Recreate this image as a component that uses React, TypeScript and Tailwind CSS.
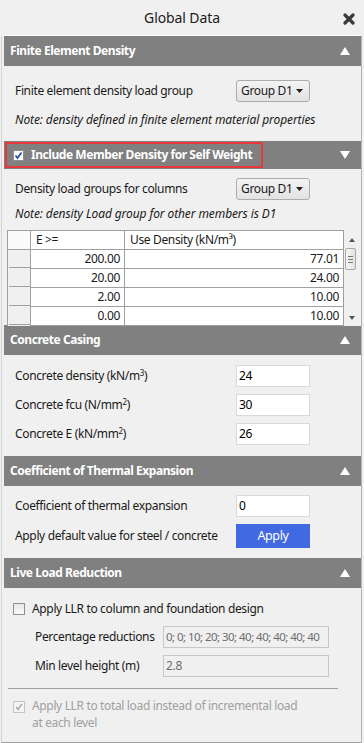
import React from 'react';

function TriUp() {
  return (
    <svg width="10" height="8" viewBox="0 0 10 8">
      <path d="M5 0L10 8H0Z" fill="#fff" />
    </svg>
  );
}

function TriDown() {
  return (
    <svg width="10" height="8" viewBox="0 0 10 8">
      <path d="M0 0H10L5 8Z" fill="#fff" />
    </svg>
  );
}

function Header({ title }: { title: string }) {
  return (
    <div className="flex h-[30px] items-center justify-between bg-[#808080] pl-[6px] pr-[11px]">
      <span className="text-[12px] font-bold tracking-[-0.45px] text-white">{title}</span>
      <TriUp />
    </div>
  );
}

function Select({ value }: { value: string }) {
  return (
    <div className="flex h-[22px] w-[74px] items-center justify-between rounded-[3px] border border-[#acacac] bg-linear-to-b from-[#f3f3f3] to-[#e3e3e3] pl-[4px] pr-[6px] text-[12px] text-[#1a1a1a]">
      <span>{value}</span>
      <svg width="7" height="4" viewBox="0 0 7 4">
        <path d="M0 0H7L3.5 4Z" fill="#222" />
      </svg>
    </div>
  );
}

function Field({ value }: { value: string }) {
  return (
    <div className="flex h-[22px] w-[74px] items-center border border-[#d9d9d9] bg-white pl-[2px] text-[12px] text-black">
      {value}
    </div>
  );
}

function Row({ label, children }: { label: React.ReactNode; children: React.ReactNode }) {
  return (
    <div className="flex h-[22px] items-center pl-[11px]">
      <div className="w-[221px] text-[12px] text-[#1a1a1a]">{label}</div>
      {children}
    </div>
  );
}

// only the rows that show above the next panel header
const tableRows = [
  ['200.00', '77.01'],
  ['20.00', '24.00'],
  ['2.00', '10.00'],
  ['0.00', '10.00'],
];

function DensityTable() {
  return (
    <div className="mt-[8px] flex h-[96px] overflow-hidden">
      <div className="ml-[3px] w-[337px] border-t border-r border-l border-[#a0a0a0] bg-white text-[12px] text-[#1a1a1a]">
        <div className="flex h-[19px] border-b border-[#a0a0a0]">
          <div className="w-[23px] border-r border-[#a0a0a0] bg-[#fafafa]" />
          <div className="flex w-[94px] items-center border-r border-[#a0a0a0] pl-[5px]">E &gt;=</div>
          <div className="flex flex-1 items-center pl-[5px]">Use Density (kN/m³)</div>
        </div>
        {tableRows.map((r, i) => (
          <div key={i} className="flex h-[19px]">
            <div className="w-[23px] border-r border-[#a0a0a0] bg-[#f0f0f0]">
              <div className="ml-[1px] h-[18px] border-b border-[#a0a0a0]" />
            </div>
            <div className="flex w-[94px] items-center justify-end border-r border-b border-[#a0a0a0] pr-[4px]">{r[0]}</div>
            <div className="flex flex-1 items-center justify-end border-b border-[#a0a0a0] pr-[4px]">{r[1]}</div>
          </div>
        ))}
        <div className="flex h-[19px]">
          <div className="w-[23px] border-r border-[#a0a0a0] bg-[#f0f0f0]" />
          <div className="w-[94px] border-r border-[#a0a0a0]" />
        </div>
      </div>
      <div className="relative w-[17px] bg-[#f0f0f0]">
        <svg className="absolute top-[8px] left-[5px]" width="6" height="4" viewBox="0 0 6 4">
          <path d="M3 0L6 4H0Z" fill="#555" />
        </svg>
        <div className="absolute top-[18px] left-[1px] flex h-[22px] w-[11px] flex-col items-center justify-center gap-[2px] rounded-[2px] border border-[#a8a8a8] bg-linear-to-r from-[#f6f6f6] to-[#e2e2e2]">
          <div className="h-px w-[5px] bg-[#777]" />
          <div className="h-px w-[5px] bg-[#777]" />
          <div className="h-px w-[5px] bg-[#777]" />
        </div>
        <svg className="absolute top-[86px] left-[5px]" width="6" height="4" viewBox="0 0 6 4">
          <path d="M0 0H6L3 4Z" fill="#555" />
        </svg>
      </div>
    </div>
  );
}

export default function App() {
  return (
    <div className="h-[743px] w-[364px] overflow-hidden bg-[#f0f0f0] font-['Noto_Sans',sans-serif] tracking-[-0.35px]">
      {/* Title bar */}
      <div className="relative flex h-[35px] items-center justify-center">
        <span className="text-[14px] tracking-[-0.1px] text-[#1a1a1a]">Global Data</span>
        <svg className="absolute top-[13px] right-[9px]" width="12" height="12" viewBox="0 0 12 12">
          <path d="M2 2L10 10M10 2L2 10" stroke="#3a3a3a" strokeWidth="3.2" strokeLinecap="round" />
        </svg>
      </div>

      <div className="ml-[1px] h-[708px] w-[361px] border-t border-r border-b border-l border-t-white border-r-[#b4b4b4] border-b-[#a0a0a0] border-l-[#d4d4d4] pl-[2px]">
        {/* Finite Element Density */}
        <Header title="Finite Element Density" />
        <div className="h-[75px]">
          <div className="pt-[14px]">
            <Row label="Finite element density load group">
              <Select value="Group D1" />
            </Row>
          </div>
          <div className="mt-[10px] pl-[11px] text-[12px] leading-[16px] tracking-[-0.1px] text-[#1a1a1a] italic">
            Note: density defined in finite element material properties
          </div>
        </div>

        {/* Include member density */}
        <div className="flex h-[28px] items-center justify-between bg-[#808080] pr-[11px]">
          <div className="ml-[1px] flex h-[26px] w-[258px] items-center border-2 border-[#e8383d] pl-[6px]">
            <div className="mr-[7px] flex h-[11px] w-[11px] items-center justify-center border border-[#8f8f8f] bg-white">
              <svg width="9" height="9" viewBox="0 0 9 9">
                <path d="M1.5 4.5L3.5 7L7.5 1.5" stroke="#2b4fa8" strokeWidth="1.8" fill="none" />
              </svg>
            </div>
            <span className="text-[12px] font-bold tracking-[-0.45px] whitespace-nowrap text-white">
              Include Member Density for Self Weight
            </span>
          </div>
          <TriDown />
        </div>
        <div className="h-[156px]">
          <div className="pt-[9px]">
            <Row label="Density load groups for columns">
              <Select value="Group D1" />
            </Row>
          </div>
          <div className="mt-[6px] pl-[11px] text-[12px] leading-[16px] tracking-[-0.1px] text-[#1a1a1a] italic">
            Note: density Load group for other members is D1
          </div>
          <DensityTable />
        </div>

        {/* Concrete Casing */}
        <Header title="Concrete Casing" />
        <div className="flex h-[101px] flex-col gap-[7px] pt-[10px]">
          <Row label={<>Concrete density (kN/m<sup className="text-[8px]">3</sup>)</>}>
            <Field value="24" />
          </Row>
          <Row label={<>Concrete fcu (N/mm<sup className="text-[8px]">2</sup>)</>}>
            <Field value="30" />
          </Row>
          <Row label={<>Concrete E (kN/mm<sup className="text-[8px]">2</sup>)</>}>
            <Field value="26" />
          </Row>
        </div>

        {/* Thermal expansion */}
        <Header title="Coefficient of Thermal Expansion" />
        <div className="flex h-[72px] flex-col gap-[7px] pt-[9px]">
          <Row label="Coefficient of thermal expansion">
            <Field value="0" />
          </Row>
          <div className="flex h-[24px] items-center pl-[11px]">
            <div className="w-[221px] text-[12px] text-[#1a1a1a]">Apply default value for steel / concrete</div>
            <button className="h-[24px] w-[74px] bg-[#4169e1] text-[12.5px] text-white">Apply</button>
          </div>
        </div>

        {/* Live Load Reduction */}
        <Header title="Live Load Reduction" />
        <div className="pt-[13px]">
          <div className="flex h-[16px] items-center pl-[9px]">
            <div className="mr-[7px] h-[12px] w-[12px] border border-[#8f8f8f] bg-linear-to-b from-[#e8e8e8] to-[#fafafa]" />
            <span className="text-[12px] text-[#1a1a1a]">Apply LLR to column and foundation design</span>
          </div>
          <div className="mt-[9px] flex h-[22px] items-center pl-[31px]">
            <div className="w-[128px] text-[12px] text-[#1a1a1a]">Percentage reductions</div>
            <div className="flex h-[22px] w-[166px] items-center overflow-hidden border border-[#c8c8c8] bg-[#f0f0f0] pl-[2px] text-[11.5px] tracking-[-0.55px] whitespace-nowrap text-[#6d6d6d]">
              0; 0; 10; 20; 30; 40; 40; 40; 40; 40
            </div>
          </div>
          <div className="mt-[7px] flex h-[22px] items-center pl-[31px]">
            <div className="w-[128px] text-[12px] text-[#1a1a1a]">Min level height (m)</div>
            <div className="flex h-[22px] w-[166px] items-center border border-[#c8c8c8] bg-[#f0f0f0] pl-[2px] text-[12px] text-[#6d6d6d]">
              2.8
            </div>
          </div>
          <div className="mt-[11px] ml-[4px] h-px w-[330px] bg-[#a0a0a0]" />
          <div className="mt-[8px] flex pl-[9px]">
            <div className="mt-[4px] mr-[7px] flex h-[12px] w-[12px] items-center justify-center border border-[#c4c4c4] bg-[#f4f4f4]">
              <svg width="8" height="8" viewBox="0 0 8 8">
                <path d="M1.2 4L3 6.5L6.8 1.2" stroke="#a8a8a8" strokeWidth="1.4" fill="none" />
              </svg>
            </div>
            <span className="text-[12px] leading-[17px] text-[#a0a0a0]">
              Apply LLR to total load instead of incremental load
              <br />
              at each level
            </span>
          </div>
        </div>
      </div>
    </div>
  );
}
